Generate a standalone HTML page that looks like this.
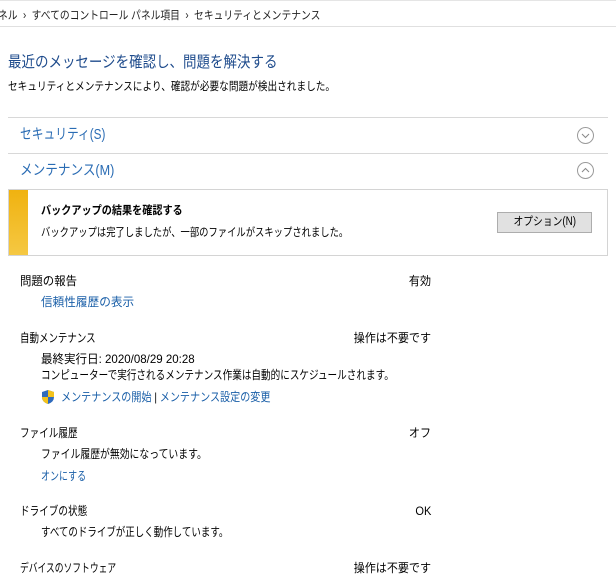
<!DOCTYPE html>
<html><head><meta charset="utf-8"><style>
body{margin:0;width:616px;height:582px;background:#fff;overflow:hidden;position:relative;font-family:"Liberation Sans","Noto Sans CJK JP",sans-serif;color:#000;font-size:12px}
.a{position:absolute;white-space:nowrap;line-height:1;transform-origin:0 0}
.l{color:#1a5fa8}
.r{text-align:right;right:185px;transform-origin:100% 0;transform:scaleX(.92)}
.circ{position:absolute;width:17px;height:17px;border:1px solid #9a9a9a;border-radius:50%;box-sizing:border-box}
</style></head><body>
<div style="position:absolute;left:0;top:0;width:616px;height:27px;border-top:1px solid #e5e5e5;border-bottom:1px solid #e0e0e0;box-sizing:border-box"></div>
<div class="a" style="left:-2px;top:11px;font-size:11.5px;color:#222;transform:scaleX(.85)">ネル&nbsp;&nbsp;›&nbsp;&nbsp;すべてのコントロール パネル項目&nbsp;&nbsp;›&nbsp;&nbsp;セキュリティとメンテナンス</div>
<div class="a" style="left:8px;top:55px;font-size:15.5px;color:#1e4b8c;transform:scaleX(.87)">最近のメッセージを確認し、問題を解決する</div>
<div class="a" style="left:8px;top:82px;font-size:11.5px;transform:scaleX(.84)">セキュリティとメンテナンスにより、確認が必要な問題が検出されました。</div>
<div style="position:absolute;left:8px;top:117px;width:600px;height:1px;background:#d8d8d8"></div>
<div class="a" style="left:20px;top:128px;font-size:14.5px;color:#2a6cb4;transform:scaleX(.81)">セキュリティ(S)</div>
<div class="circ" style="left:577px;top:127px"></div>
<svg style="position:absolute;left:577px;top:127px" width="17" height="17"><path d="M5 7 L8.5 10.5 L12 7" fill="none" stroke="#888" stroke-width="1"/></svg>
<div style="position:absolute;left:8px;top:153px;width:600px;height:1px;background:#d8d8d8"></div>
<div class="a" style="left:20px;top:164px;font-size:14.5px;color:#2a6cb4;transform:scaleX(.87)">メンテナンス(M)</div>
<div class="circ" style="left:577px;top:162px"></div>
<svg style="position:absolute;left:577px;top:162px" width="17" height="17"><path d="M5 10 L8.5 6.5 L12 10" fill="none" stroke="#888" stroke-width="1"/></svg>
<div style="position:absolute;left:8px;top:189px;width:600px;height:67px;border:1px solid #d4d4d4;box-sizing:border-box"></div>
<div style="position:absolute;left:9px;top:190px;width:19px;height:65px;background:linear-gradient(#f0b210,#f5c843)"></div>
<div class="a" style="left:41px;top:206px;font-size:11.5px;font-weight:bold;transform:scaleX(.88)">バックアップの結果を確認する</div>
<div class="a" style="left:41px;top:228px;font-size:11.5px;transform:scaleX(.81)">バックアップは完了しましたが、一部のファイルがスキップされました。</div>
<div style="position:absolute;left:497px;top:212px;width:95px;height:21px;background:#e1e1e1;border:1px solid #adadad;box-sizing:border-box;font-size:11.5px;text-align:center;line-height:19px"><span style="display:inline-block;transform:scaleX(.85)">オプション(N)</span></div>

<div class="a" style="left:20px;top:275px;transform:scaleX(.95)">問題の報告</div><div class="a r" style="top:275px">有効</div>
<div class="a l" style="left:41px;top:296px;transform:scaleX(.97)">信頼性履歴の表示</div>
<div class="a" style="left:20px;top:332px;transform:scaleX(.79)">自動メンテナンス</div><div class="a r" style="top:332px">操作は不要です</div>
<div class="a" style="left:41px;top:353px;transform:scaleX(.96)">最終実行日: 2020/08/29 20:28</div>
<div class="a" style="left:41px;top:369px;transform:scaleX(.8)">コンピューターで実行されるメンテナンス作業は自動的にスケジュールされます。</div>
<svg style="position:absolute;left:40px;top:389px" width="16" height="16"><path d="M8 1 L14 3 L14 8 Q14 13 8 15 Q2 13 2 8 L2 3 Z" fill="#2f6bbd"/><path d="M8 1 L14 3 L14 8 L8 8 Z" fill="#f3c21b"/><path d="M2 8 L8 8 L8 15 Q2 13 2 8Z" fill="#f3c21b"/></svg>
<div class="a l" style="left:61px;top:391px;transform:scaleX(.84)">メンテナンスの開始 <span style="color:#000">|</span> メンテナンス設定の変更</div>
<div class="a" style="left:20px;top:427px;transform:scaleX(.8)">ファイル履歴</div><div class="a r" style="top:427px">オフ</div>
<div class="a" style="left:41px;top:448px;transform:scaleX(.82)">ファイル履歴が無効になっています。</div>
<div class="a l" style="left:41px;top:470px;transform:scaleX(.75)">オンにする</div>
<div class="a" style="left:20px;top:505px;transform:scaleX(.8)">ドライブの状態</div><div class="a r" style="top:505px">OK</div>
<div class="a" style="left:41px;top:526px;transform:scaleX(.79)">すべてのドライブが正しく動作しています。</div>
<div class="a" style="left:20px;top:562px;transform:scaleX(.73)">デバイスのソフトウェア</div><div class="a r" style="top:562px">操作は不要です</div>
</body></html>
